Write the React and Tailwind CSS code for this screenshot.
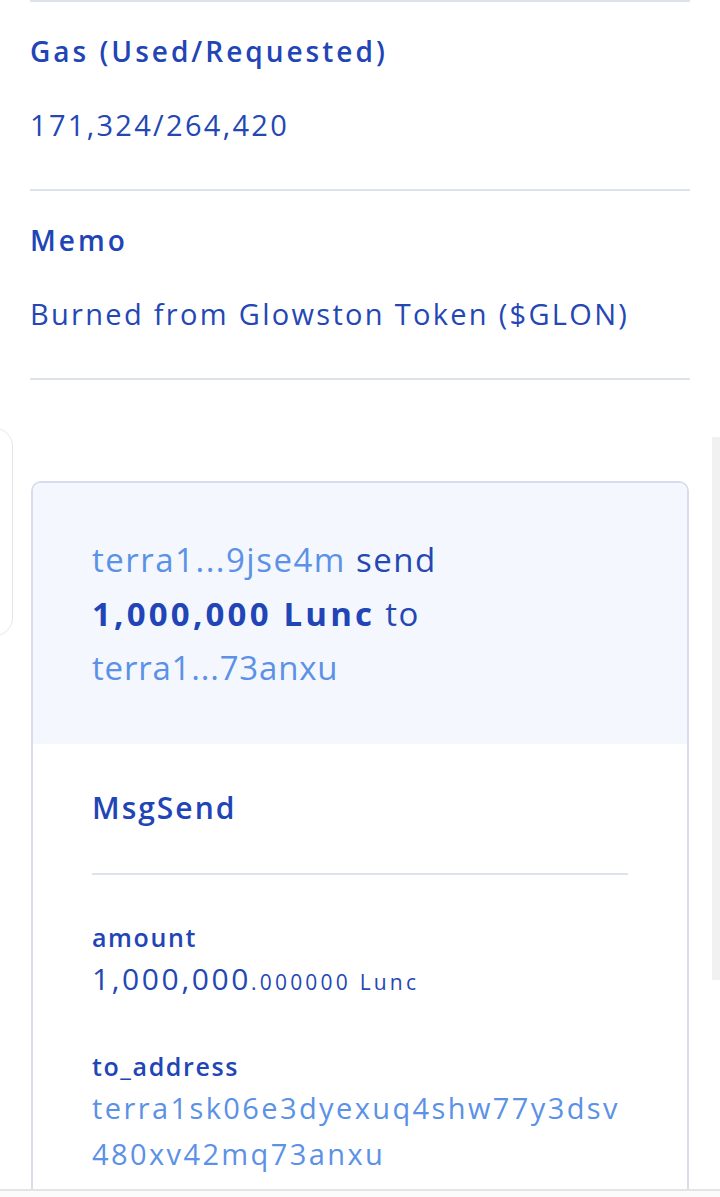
import React from 'react';

const font = { fontFamily: '"Open Sans", "Liberation Sans", sans-serif' };

const InfoRow = ({ label, value }) => (
  <div className="border-t-2 border-[#dde2ec] pt-[29px] pb-[44px]">
    <h4 className="text-[28px] leading-[40px] font-semibold tracking-[3px] text-[#2145b6]">{label}</h4>
    <p className="mt-[34px] text-[29px] leading-[40px] tracking-[2.3px] text-[#2447b4]">{value}</p>
  </div>
);

const Field = ({ label, children, className = '' }) => (
  <div className={className}>
    <p className="text-[25px] leading-[32px] font-semibold tracking-[1.6px] text-[#2145b6]">{label}</p>
    {children}
  </div>
);

export default function App() {
  return (
    <div className="relative min-h-[1300px] bg-white overflow-hidden" style={font}>
      {/* Tx details */}
      <div className="px-[30px]">
        <InfoRow label="Gas (Used/Requested)" value="171,324/264,420" />
        <InfoRow label="Memo" value="Burned from Glowston Token ($GLON)" />
        <div className="border-t-2 border-[#dde2ec]" />
      </div>

      {/* Message card */}
      <div className="mx-[31px] mt-[101px] rounded-[10px] border-2 border-[#d8dded] overflow-hidden">
        <div className="bg-[#f4f7fd] pl-[59px] pr-[30px] pt-[50px] pb-[49px] text-[33px] leading-[54px] tracking-[1.5px] text-[#2447b4]">
          <span className="whitespace-nowrap text-[#5b91e6]">terra1...9jse4m</span> send{' '}
          <span className="whitespace-nowrap font-bold tracking-[3.2px] text-[#2145b6]">1,000,000 Lunc</span> to{' '}
          <span className="whitespace-nowrap tracking-[0.8px] text-[#5b91e6]">terra1...73anxu</span>
        </div>
        <div className="bg-white px-[59px] pt-[44px] pb-[80px]">
          <div className="border-b-2 border-[#dde2ec] pb-[45px]">
            <h3 className="text-[30px] leading-[40px] font-semibold tracking-[2px] text-[#2145b6]">MsgSend</h3>
          </div>
          <Field label="amount" className="mt-[46px]">
            <p className="mt-[4px] leading-[44px] text-[#2447b4]">
              <span className="text-[30px] tracking-[2.6px]">1,000,000</span>
              <span className="text-[21px] tracking-[3.2px]">.000000 Lunc</span>
            </p>
          </Field>
          <Field label="to_address" className="mt-[44px]">
            <p className="mt-[3px] text-[29px] leading-[46px] tracking-[2.4px] text-[#5b91e6]">
              <span className="block">terra1sk06e3dyexuq4shw77y3dsv</span>
              <span className="block">480xv42mq73anxu</span>
            </p>
          </Field>
        </div>
      </div>

      {/* floating tab cut off at left */}
      <div className="absolute left-[-24px] top-[428px] w-[37px] h-[208px] rounded-[18px] border border-[#e6e6e6] bg-white" />

      {/* scrollbar track */}
      <div className="absolute right-0 top-[437px] w-[8px] h-[543px] bg-[#f1f1f1]" />

      {/* bottom bar edge */}
      <div className="absolute left-0 right-0 top-[1189px] h-[20px] border-t-2 border-[#e4e4e4] bg-[#fbfbfb]" />
    </div>
  );
}
